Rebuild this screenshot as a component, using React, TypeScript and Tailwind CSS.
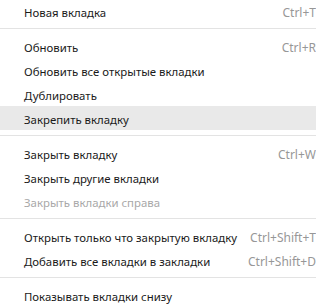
type Item = { label: string; shortcut?: string; disabled?: boolean; active?: boolean };

const groups: Item[][] = [
  [{ label: "Новая вкладка", shortcut: "Ctrl+T" }],
  [
    { label: "Обновить", shortcut: "Ctrl+R" },
    { label: "Обновить все открытые вкладки" },
    { label: "Дублировать" },
    { label: "Закрепить вкладку", active: true },
  ],
  [
    { label: "Закрыть вкладку", shortcut: "Ctrl+W" },
    { label: "Закрыть другие вкладки" },
    { label: "Закрыть вкладки справа", disabled: true },
  ],
  [
    { label: "Открыть только что закрытую вкладку", shortcut: "Ctrl+Shift+T" },
    { label: "Добавить все вкладки в закладки", shortcut: "Ctrl+Shift+D" },
  ],
  [{ label: "Показывать вкладки снизу" }],
];

function MenuRow({ item }: { item: Item }) {
  return (
    <div
      className={`flex items-center justify-between h-6 pt-[3px] pl-6 pr-[4px] ${
        item.active ? "bg-[#e9e9e9]" : ""
      }`}
    >
      <span className={item.disabled ? "text-[#a8a8a8]" : "text-[#1a1a1a]"}>{item.label}</span>
      {item.shortcut && <span className="text-[12px] text-[#979797]">{item.shortcut}</span>}
    </div>
  );
}

export default function App() {
  return (
    <div className="w-[316px] h-[306px] overflow-hidden bg-white">
      <div
        className="w-[320px] -mt-px text-[11.4px] leading-4"
        style={{ fontFamily: '"Noto Sans", "Open Sans", sans-serif' }}
      >
        {groups.map((group, gi) => (
          <div key={gi}>
            {gi > 0 && <div className="h-px my-[5px] bg-[#e3e3e3]" />}
            {group.map((item) => (
              <MenuRow key={item.label} item={item} />
            ))}
          </div>
        ))}
      </div>
    </div>
  );
}
